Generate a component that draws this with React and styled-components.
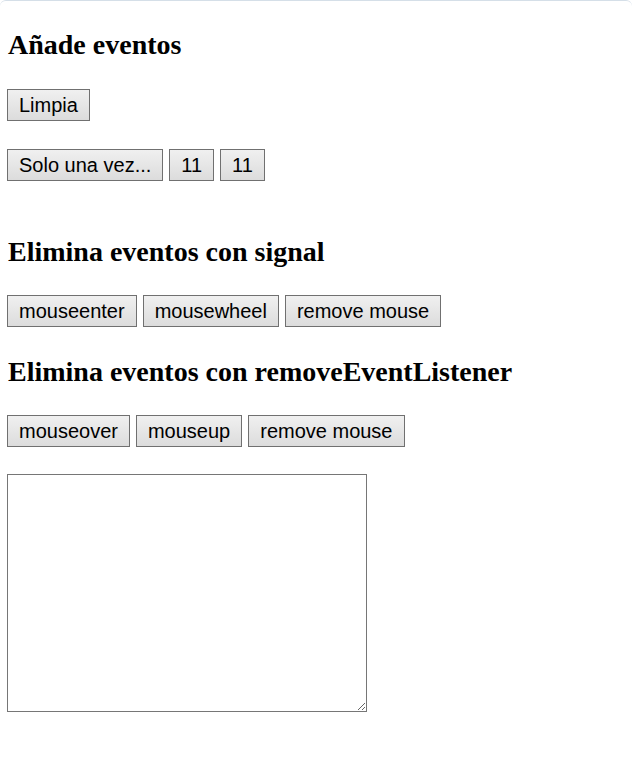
import React from "react";
import styled, { createGlobalStyle } from "styled-components";

const Global = createGlobalStyle`
  html, body { margin: 0; padding: 0; background: #fff; }
  body { font-family: "Liberation Serif", "Times New Roman", serif; }
`;

const Page = styled.div`
  min-height: 762px;
  box-sizing: border-box;
  border-top: 1px solid #d5dfe8;
  border-top-left-radius: 6px;
  border-top-right-radius: 6px;
  padding: 28px 7px 0 7px;
  display: flex;
  flex-direction: column;
  align-items: flex-start;
`;

const Heading = styled.h3`
  margin: ${(p) => p.$top || 0}px 0 0 1px;
  font-family: "Liberation Serif", "Times New Roman", serif;
  font-weight: bold;
  font-size: 28px;
  line-height: 31px;
  color: #000;
`;

const Row = styled.div`
  display: flex;
  gap: 6px;
  margin-top: ${(p) => p.$top || 29}px;
`;

const Button = styled.button`
  box-sizing: border-box;
  height: 32px;
  margin: 0;
  padding: 0 11px;
  font-family: "Liberation Sans", Arial, sans-serif;
  font-size: 20px;
  color: #000;
  background: linear-gradient(#f0f0f0, #dcdcdc);
  border: 1px solid #707070;
  border-radius: 0;
  line-height: 30px;
`;

const Area = styled.textarea`
  box-sizing: border-box;
  width: 360px;
  height: 238px;
  margin-top: 27px;
  border: 1px solid #767676;
  padding: 2px;
  font-family: "Liberation Mono", monospace;
  font-size: 13px;
  outline: none;
`;

export default function App() {
  return (
    <>
      <Global />
      <Page>
        <Heading>Añade eventos</Heading>
        <Row $top={29}>
          <Button>Limpia</Button>
        </Row>
        <Row $top={28}>
          <Button>Solo una vez...</Button>
          <Button>11</Button>
          <Button>11</Button>
        </Row>
        <Heading $top={55}>Elimina eventos con signal</Heading>
        <Row $top={28}>
          <Button>mouseenter</Button>
          <Button>mousewheel</Button>
          <Button>remove mouse</Button>
        </Row>
        <Heading $top={29}>Elimina eventos con removeEventListener</Heading>
        <Row $top={28}>
          <Button>mouseover</Button>
          <Button>mouseup</Button>
          <Button>remove mouse</Button>
        </Row>
        <Area />
      </Page>
    </>
  );
}
